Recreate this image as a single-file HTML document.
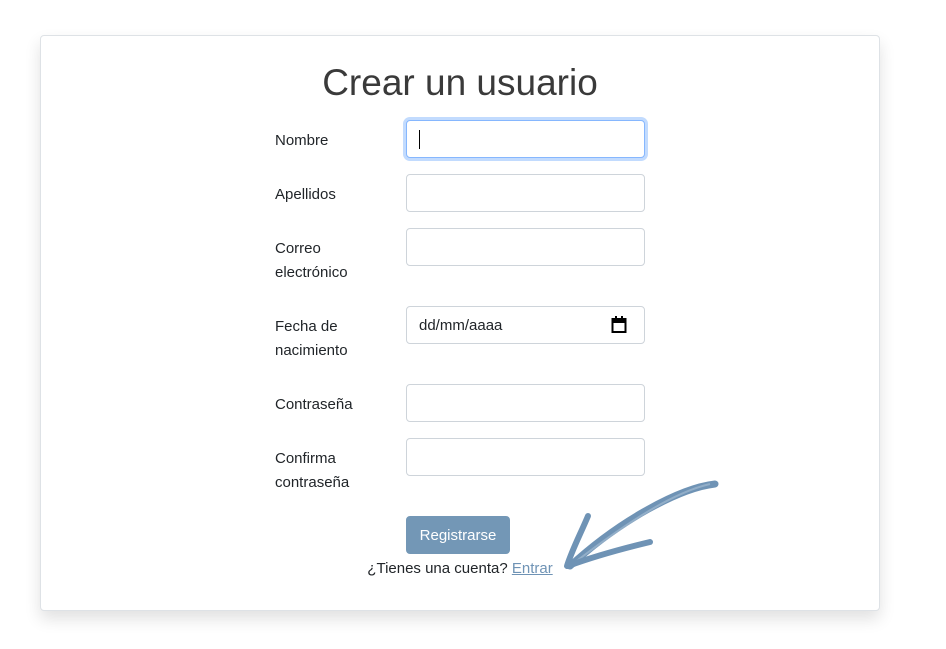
<!DOCTYPE html>
<html><head><style>
body{margin:0;width:946px;height:649px;background:#fff;font-family:"Liberation Sans",sans-serif;color:#212529;position:relative;overflow:hidden}
.card{position:absolute;left:40px;top:35px;width:838px;height:574px;border:1px solid #dee2e6;border-radius:4px;box-shadow:0 8px 16px rgba(0,0,0,.12);background:#fff}
h1{position:absolute;left:0;top:62px;width:920px;text-align:center;margin:0;font-weight:normal;font-size:37px;color:#3a3a3a}
.lbl{position:absolute;left:275px;font-size:15px;line-height:24px}
.in{position:absolute;left:406px;width:237px;height:36px;border:1px solid #ced4da;border-radius:4px;background:#fff;box-sizing:content-box}
.focus{border-color:#86b7fe;box-shadow:0 0 0 3px rgba(13,110,253,.25)}
.btn{position:absolute;left:406px;top:516px;width:104px;height:38px;background:#7397b6;border-radius:4px;color:#fff;font-size:15px;line-height:40px;text-align:center}
.foot{position:absolute;left:0;top:559px;width:920px;text-align:center;font-size:15px;line-height:20px}
.foot a{color:#6f93b5;text-decoration:underline}
</style></head><body>
<div class="card"></div>
<h1>Crear un usuario</h1>
<div class="lbl" style="top:129px">Nombre</div>
<div class="in focus" style="top:120px"><div style="position:absolute;left:12px;top:9px;width:1px;height:19px;background:#000"></div></div>
<div class="lbl" style="top:183px">Apellidos</div>
<div class="in" style="top:174px"></div>
<div class="lbl" style="top:237px">Correo<br>electrónico</div>
<div class="in" style="top:228px"></div>
<div class="lbl" style="top:315px">Fecha de<br>nacimiento</div>
<div class="in" style="top:306px"><span style="position:absolute;left:12px;top:10px;font-size:15px">dd/mm/aaaa</span>
<svg style="position:absolute;left:204px;top:9px" width="16" height="18" viewBox="0 0 16 18"><rect x="1.5" y="3" width="13" height="13" fill="none" stroke="#000" stroke-width="2"/><rect x="1" y="3" width="14" height="4" fill="#000"/><rect x="4" y="0" width="2" height="4" fill="#000"/><rect x="10" y="0" width="2" height="4" fill="#000"/></svg></div>
<div class="lbl" style="top:393px">Contraseña</div>
<div class="in" style="top:384px"></div>
<div class="lbl" style="top:447px">Confirma<br>contraseña</div>
<div class="in" style="top:438px"></div>
<div class="btn">Registrarse</div>
<div class="foot">¿Tienes una cuenta? <a>Entrar</a></div>
<svg style="position:absolute;left:560px;top:480px" width="160" height="95" viewBox="0 0 160 95">
<path d="M155 4 C120 8 60 40 10 86" stroke="#6f93b5" stroke-width="7" fill="none" stroke-linecap="round"/>
<path d="M150 4 C115 12 70 40 14 83" stroke="#92aec8" stroke-width="2" fill="none"/>
<path d="M28 36 C20 55 12 70 7 86" stroke="#6f93b5" stroke-width="6" fill="none" stroke-linecap="round"/>
<path d="M8 86 C35 76 65 68 90 62" stroke="#6f93b5" stroke-width="6" fill="none" stroke-linecap="round"/>
</svg>
</body></html>
